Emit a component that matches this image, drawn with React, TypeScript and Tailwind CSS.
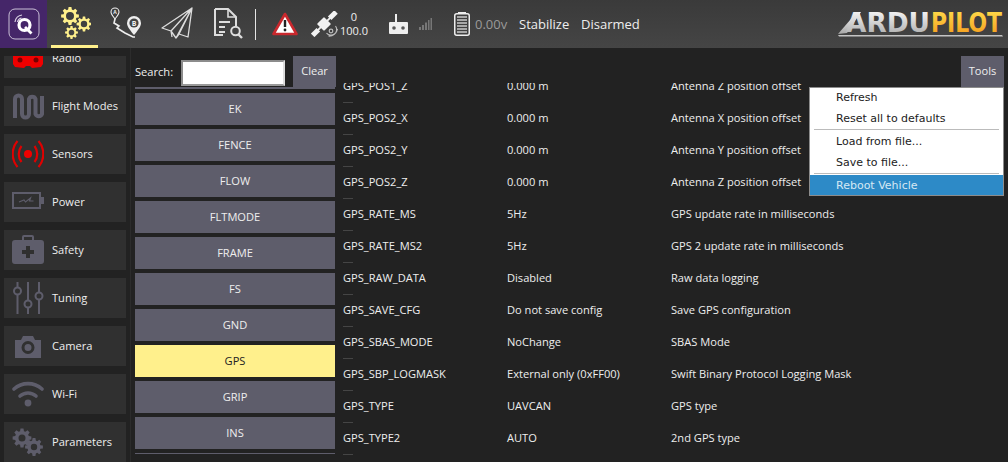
import React from 'react';

const gearPath = (cx: number, cy: number, r: number, hole: number, teeth = 8) => {
  const pts: string[] = [];
  const inner = r * 0.74;
  const step = (Math.PI * 2) / teeth;
  for (let i = 0; i < teeth; i++) {
    const a = i * step;
    const p = [
      [inner, a - step * 0.36],
      [r, a - step * 0.2],
      [r, a + step * 0.2],
      [inner, a + step * 0.36],
    ];
    p.forEach(([rad, t]) => {
      pts.push(`${(cx + rad * Math.cos(t)).toFixed(2)} ${(cy + rad * Math.sin(t)).toFixed(2)}`);
    });
  }
  const ring = `M${pts.join('L')}Z`;
  const h = `M${cx - hole} ${cy}a${hole} ${hole} 0 1 0 ${hole * 2} 0a${hole} ${hole} 0 1 0 ${-hole * 2} 0Z`;
  return ring + h;
};

const QLogo = () => (
  <svg width="32" height="32" viewBox="0 0 32 32">
    <rect x="1" y="1" width="30" height="30" rx="6" fill="none" stroke="#c9bfd6" strokeWidth="1" />
    <circle cx="16.500" cy="17" r="5.500" fill="none" stroke="#fff" strokeWidth="3.200" />
    <path d="M17 19l6.500 6.500" stroke="#fff" strokeWidth="2.800" />
    <path d="M7 14a8 8 0 0 1 7-7M9.500 14a5 5 0 0 1 4-4" fill="none" stroke="#d8d0e2" strokeWidth="1.200" />
  </svg>
);

const ConfigIcon = () => (
  <svg width="32" height="32" viewBox="0 0 32 32">
    <path fillRule="evenodd" fill="#fff08c" d={gearPath(11, 9, 9, 4)} />
    <path fillRule="evenodd" fill="#fff08c" d={gearPath(25, 17, 7.5, 3.2)} />
    <path fillRule="evenodd" fill="#fff08c" d={gearPath(12.5, 25.5, 6.5, 2.8)} />
  </svg>
);

const RouteIcon = () => (
  <svg width="32" height="32" viewBox="0 0 32 32">
    <path d="M5 12l-1 4 5 3-2 2 8 5 8 4h2" fill="none" stroke="#eee" strokeWidth="1.6" />
    <path d="M5 12C2 8 1 7 1 5a4 4 0 0 1 8 0c0 2-1 3-4 7Z" fill="#3f3f3f" stroke="#eee" strokeWidth="1.1" />
    <text x="5" y="7" fontSize="5" fontWeight="700" textAnchor="middle" fill="#eee" fontFamily="Open Sans, sans-serif">A</text>
    <path d="M24 28c-5-6-7-9-7-12a7 7 0 0 1 14 0c0 3-2 6-7 12Z" fill="#eee" />
    <circle cx="24" cy="16" r="4.600" fill="#444" />
    <text x="24" y="18.500" fontSize="7" fontWeight="700" textAnchor="middle" fill="#eee" fontFamily="Open Sans, sans-serif">B</text>
  </svg>
);

const PlaneIcon = () => (
  <svg width="32" height="32" viewBox="0 0 32 32">
    <path
      d="M31 1L1 21l9 3 5 7 3-4 9 3ZM31 1L10 24l1 6M31 1L15 31M31 1L18 27"
      fill="none"
      stroke="#ddd"
      strokeWidth="1.3"
      strokeLinejoin="round"
    />
  </svg>
);

const LogIcon = () => (
  <svg width="32" height="32" viewBox="0 0 32 32">
    <path d="M3 2h13l8 8v9M11 28H3V2" fill="none" stroke="#ddd" strokeWidth="2" />
    <path d="M16 2v8h8" fill="none" stroke="#ddd" strokeWidth="1.6" />
    <path d="M7 15h11M7 20h6M7 25h6" stroke="#ddd" strokeWidth="1.8" />
    <circle cx="23.5" cy="24" r="4.3" fill="none" stroke="#ddd" strokeWidth="2" />
    <path d="M26.5 27.5l3.5 3.5" stroke="#ddd" strokeWidth="2.4" />
  </svg>
);

const WarningIcon = () => (
  <svg width="26" height="24" viewBox="0 0 26 24">
    <path d="M13 2L24.5 22H1.5Z" fill="#fff" stroke="#c9282d" strokeWidth="2.6" strokeLinejoin="round" />
    <path d="M13 8v7" stroke="#222" strokeWidth="2.4" />
    <circle cx="13" cy="18" r="1.4" fill="#222" />
  </svg>
);

const SatelliteIcon = () => (
  <svg width="28" height="26" viewBox="0 0 28 26">
    <g fill="#f2f2f2" transform="rotate(-45 13 13)">
      <rect x="-3" y="10.500" width="8" height="5" />
      <rect x="8" y="8" width="10" height="10" rx="1" />
      <rect x="21" y="10.500" width="9" height="5" />
      <rect x="4" y="12" width="18" height="2" />
    </g>
    <circle cx="20" cy="20" r="1.800" fill="none" stroke="#bbb" strokeWidth="1.200" />
    <path d="M15.500 22a5.500 5.500 0 0 0 9-7M17.500 25a8.500 8.500 0 0 0 9-7" fill="none" stroke="#bbb" strokeWidth="1.200" />
  </svg>
);

const RcIcon = () => (
  <svg width="19" height="20" viewBox="0 0 19 20">
    <rect x="6" y="0" width="2" height="8" fill="#eee" />
    <rect x="0" y="8" width="19" height="12" rx="1" fill="#eee" />
    <circle cx="5" cy="14" r="1.800" fill="#555" />
    <circle cx="14" cy="14" r="1.800" fill="#555" />
  </svg>
);

const SignalIcon = () => (
  <svg width="13" height="12" viewBox="0 0 13 12">
    <g fill="#777">
      <rect x="0" y="9" width="2" height="3" />
      <rect x="3" y="7" width="2" height="5" />
      <rect x="6" y="4.500" width="2" height="7.500" />
      <rect x="9" y="2" width="1.500" height="10" />
      <rect x="11.500" y="0" width="1.500" height="12" />
    </g>
  </svg>
);

const BatteryIcon = () => (
  <svg width="16" height="24" viewBox="0 0 16 24">
    <rect x="4" y="0" width="8" height="2" fill="#eee" />
    <rect x="0.750" y="1.750" width="14.500" height="21.500" rx="2" fill="none" stroke="#eee" strokeWidth="1.500" />
    <path d="M3 5h10M3 8h10M3 11h10M3 14h10M3 17h10M3 20h10" stroke="#ccc" strokeWidth="1.500" />
  </svg>
);

const ArduPilotLogo = () => (
  <svg width="165" height="28" viewBox="0 0 165 28">
    <defs>
      <linearGradient id="ardu" x1="0" y1="0" x2="0" y2="1">
        <stop offset="0" stopColor="#ffffff" />
        <stop offset="1" stopColor="#a6a6a6" />
      </linearGradient>
      <linearGradient id="pilot" x1="0" y1="0" x2="0" y2="1">
        <stop offset="0" stopColor="#ffe14f" />
        <stop offset="1" stopColor="#f4981a" />
      </linearGradient>
    </defs>
    <path d="M0 23L19 1h4L9 22Z" fill="url(#ardu)" />
    <text
      x="8"
      y="21"
      fontSize="27"
      fontWeight="700"
      fontFamily="DejaVu Sans, sans-serif"
      fill="url(#ardu)"
      textLength="84"
      lengthAdjust="spacingAndGlyphs"
    >
      ARDU
    </text>
    <text
      x="93"
      y="21"
      fontSize="27"
      fontWeight="700"
      fontFamily="DejaVu Sans, sans-serif"
      fill="url(#pilot)"
      textLength="71"
      lengthAdjust="spacingAndGlyphs"
    >
      PILOT
    </text>
    <path d="M0 24H164l1 1.500H1Z" fill="#c4c4c4" />
  </svg>
);

const fill = '#5e5d6b';

const sideIcons: Record<string, React.ReactNode> = {
  Radio: (
    <svg width="32" height="32" viewBox="0 0 32 32">
      <path d="M1 0H31V22l-2 3-9 1-2-2h-4l-2 2-9-1-2-3Z" fill="#f00000" />
      <circle cx="8" cy="18" r="2.500" fill="#700" />
      <circle cx="24" cy="18" r="2.500" fill="#700" />
    </svg>
  ),
  'Flight Modes': (
    <svg width="32" height="32" viewBox="0 0 32 32">
      <path
        d="M3 28V9a3.500 3.500 0 0 1 7 0v15a3.500 3.500 0 0 0 7 0V9a3.500 3.500 0 0 1 6.500 0v15a3.500 3.500 0 0 0 6.500 0V6"
        fill="none"
        stroke={fill}
        strokeWidth="4"
      />
    </svg>
  ),
  Sensors: (
    <svg width="32" height="32" viewBox="0 0 32 32">
      <circle cx="16" cy="16" r="4" fill="#f00000" />
      <g fill="none" stroke="#e00000" strokeWidth="2.200">
        <path d="M9.500 8a13 13 0 0 0 0 16M22.500 8a13 13 0 0 1 0 16" />
        <path d="M5.500 3a20 20 0 0 0 0 26M26.500 3a20 20 0 0 1 0 26" />
      </g>
    </svg>
  ),
  Power: (
    <svg width="32" height="32" viewBox="0 0 32 32">
      <rect x="1" y="7" width="27" height="15" fill="none" stroke={fill} strokeWidth="2" />
      <rect x="28" y="11" width="4" height="7" fill={fill} />
      <path d="M7 16l5-2 1.500 2 5-4-1 3h4" fill="none" stroke={fill} strokeWidth="1.200" />
    </svg>
  ),
  Safety: (
    <svg width="32" height="32" viewBox="0 0 32 32">
      <path
        fillRule="evenodd"
        fill={fill}
        d="M10 6V3a2 2 0 0 1 2-2h8a2 2 0 0 1 2 2v3h7a3 3 0 0 1 3 3v18a3 3 0 0 1-3 3H3a3 3 0 0 1-3-3V9a3 3 0 0 1 3-3ZM12 6h8V3h-8ZM14 12v4h-4v4h4v4h4v-4h4v-4h-4v-4Z"
      />
    </svg>
  ),
  Tuning: (
    <svg width="32" height="32" viewBox="0 0 32 32">
      <g stroke={fill} strokeWidth="2" fill="none">
        <path d="M5.500 0v5M5.500 13v19M16 0v18M16 26v6M27 0v10M27 18v14" />
        <circle cx="5.500" cy="9" r="3.500" />
        <circle cx="16" cy="22" r="3.500" />
        <circle cx="27" cy="14" r="3.500" />
      </g>
    </svg>
  ),
  Camera: (
    <svg width="32" height="32" viewBox="0 0 32 32">
      <path
        fillRule="evenodd"
        fill={fill}
        d="M3 10h6l2-4h10l2 4h6v18H3ZM16 11a6.500 6.500 0 1 0 0 13 6.500 6.500 0 0 0 0-13Zm0 3a3.500 3.500 0 1 1 0 7 3.500 3.500 0 0 1 0-7Z"
      />
    </svg>
  ),
  'Wi-Fi': (
    <svg width="32" height="32" viewBox="0 0 32 32">
      <g fill="none" stroke={fill} strokeWidth="3.600" strokeLinecap="round">
        <path d="M2 11a21 21 0 0 1 28 0" />
        <path d="M8 18a12 12 0 0 1 16 0" />
      </g>
      <circle cx="16" cy="25" r="3.400" fill={fill} />
    </svg>
  ),
  Parameters: (
    <svg width="32" height="32" viewBox="0 0 32 32">
      <path fillRule="evenodd" fill={fill} d={gearPath(10, 12, 9.500, 3.500)} />
      <path fillRule="evenodd" fill={fill} d={gearPath(22, 21, 9, 3.200)} />
    </svg>
  ),
};

const sideItems = ['Flight Modes', 'Sensors', 'Power', 'Safety', 'Tuning', 'Camera', 'Wi-Fi', 'Parameters'];

const SideItem = ({ label }: { label: string }) => (
  <div className="flex items-center bg-[#303030] mx-1 shrink-0 pl-2 gap-2 h-10 mb-2">
    <div className="w-8 h-8 shrink-0">{sideIcons[label]}</div>
    <span className="text-[11.1px] text-[#eeeeee]">{label}</span>
  </div>
);

const groups = ['', 'EK', 'FENCE', 'FLOW', 'FLTMODE', 'FRAME', 'FS', 'GND', 'GPS', 'GRIP', 'INS'];

const rows = [
  ['GPS_POS1_Z', '0.000 m', 'Antenna Z position offset'],
  ['GPS_POS2_X', '0.000 m', 'Antenna X position offset'],
  ['GPS_POS2_Y', '0.000 m', 'Antenna Y position offset'],
  ['GPS_POS2_Z', '0.000 m', 'Antenna Z position offset'],
  ['GPS_RATE_MS', '5Hz', 'GPS update rate in milliseconds'],
  ['GPS_RATE_MS2', '5Hz', 'GPS 2 update rate in milliseconds'],
  ['GPS_RAW_DATA', 'Disabled', 'Raw data logging'],
  ['GPS_SAVE_CFG', 'Do not save config', 'Save GPS configuration'],
  ['GPS_SBAS_MODE', 'NoChange', 'SBAS Mode'],
  ['GPS_SBP_LOGMASK', 'External only (0xFF00)', 'Swift Binary Protocol Logging Mask'],
  ['GPS_TYPE', 'UAVCAN', 'GPS type'],
  ['GPS_TYPE2', 'AUTO', '2nd GPS type'],
];

const Tab = ({ children, active }: { children: React.ReactNode; active?: boolean }) => (
  <div
    className={`w-[47px] h-12 ml-1 flex items-center justify-center border-b-[3px] ${active ? 'border-[#fff08c]' : 'border-transparent'}`}
  >
    {children}
  </div>
);

const App = () => {
  return (
    <div className="w-[1008px] h-[462px] overflow-hidden bg-[#222222] flex flex-col font-['Open_Sans',sans-serif] text-[11.1px] text-[#eeeeee]">
      <header className="h-12 shrink-0 flex items-center bg-gradient-to-b from-[#3a3a3a] to-[#454545]">
        <div className="w-[47px] h-12 bg-[#452669] flex items-center justify-center">
          <QLogo />
        </div>
        <Tab active>
          <ConfigIcon />
        </Tab>
        <Tab>
          <RouteIcon />
        </Tab>
        <Tab>
          <PlaneIcon />
        </Tab>
        <Tab>
          <LogIcon />
        </Tab>
        <div className="w-px h-[31px] bg-[#e5e5e5] ml-1" />
        <div className="ml-4 flex">
          <WarningIcon />
        </div>
        <div className="ml-[13px] flex">
          <SatelliteIcon />
        </div>
        <div className="w-[30px] text-center text-[11px] leading-[14px]">
          <div>0</div>
          <div>100.0</div>
        </div>
        <div className="ml-5 flex mb-[1px]">
          <RcIcon />
        </div>
        <div className="ml-[11px] flex">
          <SignalIcon />
        </div>
        <div className="ml-[22px] flex">
          <BatteryIcon />
        </div>
        <span className="ml-[5px] w-[39px] text-[13px] text-[#9a9a9a] pt-[2px]">0.00v</span>
        <span className="ml-[5px] w-[62px] text-[13px] pt-[2px]">Stabilize</span>
        <span className="text-[13px] pt-[2px]">Disarmed</span>
        <div className="ml-auto mr-[5px] flex mt-[2px]">
          <ArduPilotLogo />
        </div>
      </header>

      <div className="flex-1 flex min-h-0">
        <aside className="w-[130px] shrink-0 mt-2 flex flex-col overflow-hidden">
          <div className="-mt-[18px]">
            <SideItem label="Radio" />
          </div>
          {sideItems.map((s) => (
            <SideItem key={s} label={s} />
          ))}
        </aside>

        <main className="relative flex-1 min-w-0 flex flex-col pt-2 border-l border-[#2c2c2c]">
          <div className="h-[31px] shrink-0 flex items-start pl-1 relative z-10">
            <span className="w-[46px] h-[31px] leading-[32px]">Search:</span>
            <input className="w-[104px] h-[26px] mt-1 bg-white border-2 border-[#8c8c8c] border-r-[#dddddd] border-b-[#999999]" />
            <button className="ml-2 w-[43px] h-[31px] bg-[#5e5d6b]">Clear</button>
            <button className="ml-auto mr-1 w-[43px] h-[31px] bg-[#5e5d6b]">Tools</button>
          </div>

          <div className="flex-1 min-h-0 flex">
            <div className="w-[200px] ml-1 shrink-0 h-[368px] overflow-hidden flex flex-col">
              {groups.map((g, i) => (
                <div
                  key={i}
                  className={`shrink-0 flex items-center justify-center ${i === 0 ? 'h-[2px] mb-1' : 'h-8 mb-1'} ${g === 'GPS' ? 'bg-[#fff08c] text-[#222222]' : 'bg-[#5e5d6b] text-[#eeeeee]'}`}
                >
                  {g}
                </div>
              ))}
              <div className="h-px shrink-0 bg-[#5e5d6b]" />
            </div>

            <div className="flex-1 min-w-0 ml-2 -mt-1 overflow-hidden">
              <div className="-mt-[12px]">
                {rows.map((r) => (
                  <div key={r[0]}>
                    <div className="h-[31px] grid grid-cols-[164px_164px_1fr] items-center whitespace-nowrap">
                      <span>{r[0]}</span>
                      <span>{r[1]}</span>
                      <span>{r[2]}</span>
                    </div>
                    <div className="h-px w-2.5 bg-[#454545]" />
                  </div>
                ))}
              </div>
            </div>
          </div>

          <div className="absolute z-20 top-[39px] right-1 w-[195px] bg-white border border-[#8c8c8c] font-['DejaVu_Sans',sans-serif] text-[11px] text-[#222222]">
            <div className="h-[21px] pl-[26px] flex items-center">Refresh</div>
            <div className="h-[21px] pl-[26px] flex items-center">Reset all to defaults</div>
            <div className="h-px mx-1 -mt-px mb-px bg-[#bbbbbb]" />
            <div className="h-[21px] pl-[26px] pt-[2px] flex items-center">Load from file...</div>
            <div className="h-[21px] pl-[26px] pt-[2px] flex items-center">Save to file...</div>
            <div className="h-px mx-1 bg-[#bbbbbb]" />
            <div className="h-5 mt-[1px] pl-[26px] pt-[2px] flex items-center bg-[#2d8ac7] text-[#d5e8f4]">Reboot Vehicle</div>
          </div>
        </main>
      </div>
    </div>
  );
};

export default App;
